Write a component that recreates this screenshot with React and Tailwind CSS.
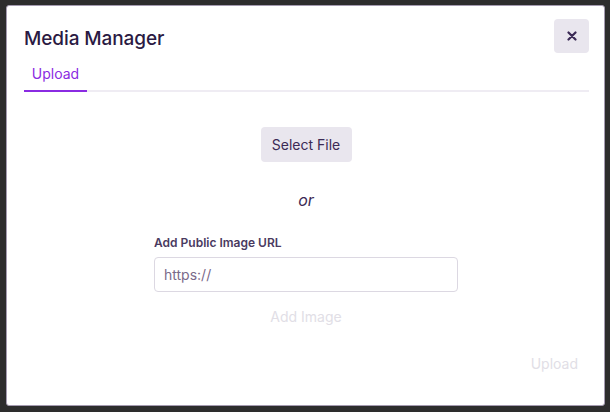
import React from 'react';

export default function App() {
  return (
    <div
      className="w-[610px] h-[412px] bg-[#2d2d2d] pt-[5px] pl-[6px] overflow-hidden"
      style={{ fontFamily: 'Inter, "Noto Sans", sans-serif' }}
    >
      <div className="w-[599px] h-[401px] bg-white border border-[#a49bb0] rounded-[3px] flex flex-col pl-[16px] pr-[15px] pt-[13px] pb-[33px]">
        {/* header */}
        <div className="flex items-start justify-between">
          <h1 className="text-[19px] leading-[24px] text-[#2b1a43] font-medium mt-[8px] ml-[1px] tracking-[-0.1px]">
            Media Manager
          </h1>
          <button className="w-[35px] h-[34px] rounded-[4px] bg-[#e9e6ee] flex items-center justify-center">
            <svg width="10" height="10" viewBox="0 0 10 10">
              <path d="M1.5 1.5 L8.5 8.5 M8.5 1.5 L1.5 8.5" stroke="#3b2a55" strokeWidth="2.2" strokeLinecap="round" />
            </svg>
          </button>
        </div>

        {/* tabs */}
        <div className="flex mt-[12px] ml-[1px] border-b-2 border-[#efecf3]">
          <div className="w-[63px] text-center text-[14px] leading-[17px] text-[#8a2be2] pb-[8px] border-b-2 border-[#8a2be2] -mb-[2px]">
            Upload
          </div>
        </div>

        {/* body */}
        <div className="flex flex-col items-center mt-[35px]">
          <button className="w-[91px] h-[35px] rounded-[4px] bg-[#e9e6ee] text-[14px] text-[#3b2a55]">
            Select File
          </button>
          <div className="mt-[28px] text-[16px] leading-[20px] italic text-[#3b2a55]">or</div>

          <div className="w-[304px] mt-[25px]">
            <label className="block text-[12px] leading-[15px] font-semibold text-[#4a3a60]">
              Add Public Image URL
            </label>
            <input
              className="mt-[7px] w-full h-[35px] border border-[#dcd8e2] rounded-[4px] px-[9px] text-[14px] text-[#7a6a8a] outline-none"
              defaultValue="https://"
            />
          </div>
          <div className="mt-[16px] text-[14px] leading-[17px] text-[#e1dee6]">Add Image</div>
        </div>

        <div className="mt-auto flex justify-end pr-[11px]">
          <span className="text-[14px] leading-[17px] text-[#e1dee6]">Upload</span>
        </div>
      </div>
    </div>
  );
}
